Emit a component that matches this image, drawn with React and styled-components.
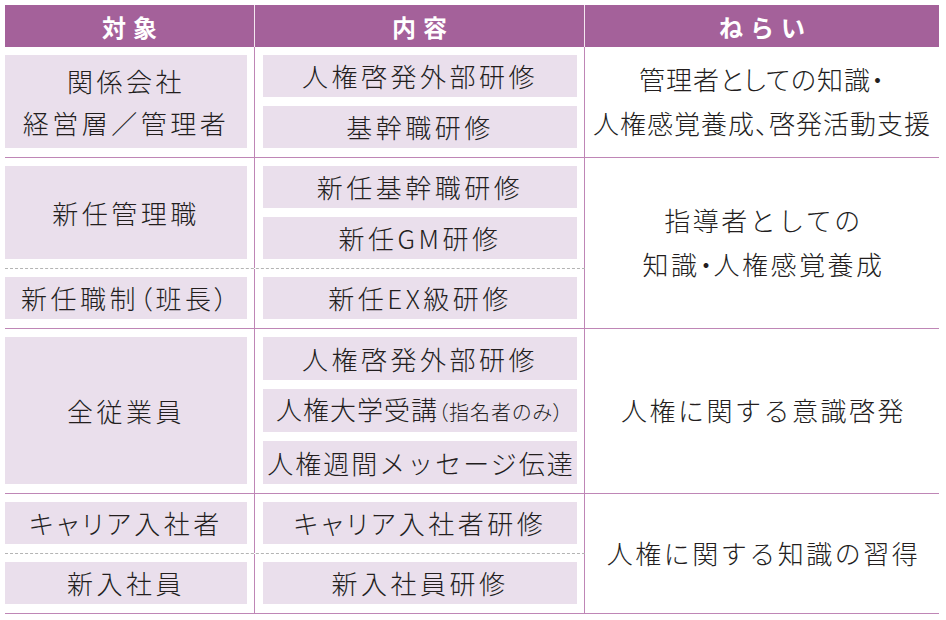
import React from "react";
import styled, { createGlobalStyle } from "styled-components";

const GlobalStyle = createGlobalStyle`
  body {
    margin: 0;
    background: #ffffff;
    font-family: "Noto Sans CJK JP", "Noto Sans", sans-serif;
    color: #231e1e;
  }
`;

const sections = [
  {
    groups: [
      {
        subject: ["関係会社", "経営層／管理者"],
        contents: [{ text: "人権啓発外部研修" }, { text: "基幹職研修" }],
      },
    ],
    aim: ["管理者としての知識・", "人権感覚養成、啓発活動支援"],
    compact: true,
  },
  {
    groups: [
      {
        subject: ["新任管理職"],
        contents: [{ text: "新任基幹職研修" }, { text: "新任GM研修" }],
      },
      {
        subject: ["新任職制（班長）"],
        contents: [{ text: "新任EX級研修" }],
      },
    ],
    aim: ["指導者としての", "知識・人権感覚養成"],
  },
  {
    groups: [
      {
        subject: ["全従業員"],
        contents: [
          { text: "人権啓発外部研修" },
          { text: "人権大学受講", note: "（指名者のみ）", tight: true },
          { text: "人権週間メッセージ伝達", wide: true },
        ],
      },
    ],
    aim: ["人権に関する意識啓発"],
  },
  {
    groups: [
      {
        subject: ["キャリア入社者"],
        contents: [{ text: "キャリア入社者研修" }],
      },
      {
        subject: ["新入社員"],
        contents: [{ text: "新入社員研修" }],
      },
    ],
    aim: ["人権に関する知識の習得"],
  },
];

const Page = styled.div`
  padding: 5px 7px 8px 5px;
`;

const Table = styled.div`
  width: 934px;
  display: flex;
  flex-direction: column;
`;

const HeadRow = styled.div`
  display: flex;
  height: 42px;
  background: #a4619a;
`;

const HeadCell = styled.div`
  width: ${(p) => p.$w}px;
  box-sizing: border-box;
  border-right: ${(p) => (p.$last ? "none" : "1px solid #f3e6f0")};
  display: flex;
  align-items: center;
  justify-content: center;
  color: #ffffff;
  font-weight: 700;
  font-size: 24px;
  letter-spacing: 7px;
  padding-left: 7px;
`;

const Section = styled.div`
  display: flex;
  border-bottom: 1px solid #bf86b6;
`;

const Groups = styled.div`
  display: flex;
  flex-direction: column;
`;

const Group = styled.div`
  display: flex;
  border-top: ${(p) => (p.$dashed ? "1px dashed #b4b4b4" : "none")};
`;

const SubjectCell = styled.div`
  width: 250px;
  box-sizing: border-box;
  border-right: 1px solid #bf86b6;
  padding: 8px 7px 9px 0;
  display: flex;
`;

const ContentCell = styled.div`
  width: 330px;
  box-sizing: border-box;
  border-right: 1px solid #bf86b6;
  padding: 8px 7px 9px 8px;
  display: flex;
  flex-direction: column;
  gap: 9px;
`;

const Box = styled.div`
  flex: 1;
  min-height: 42px;
  background: #eadfec;
  display: flex;
  flex-direction: column;
  align-items: center;
  justify-content: center;
  font-size: 26px;
  font-weight: 300;
  line-height: 42px;
  letter-spacing: ${(p) => (p.$tight ? "1px" : p.$wide ? "2px" : "3.5px")};
  font-feature-settings: ${(p) => (p.$wide ? "normal" : '"palt"')};
  padding-left: ${(p) => (p.$wide ? "2px" : "0")};
  white-space: nowrap;
`;

const Note = styled.span`
  font-size: 20px;
  letter-spacing: 1px;
`;

const AimCell = styled.div`
  width: 354px;
  display: flex;
  flex-direction: column;
  align-items: center;
  justify-content: center;
  font-size: 26px;
  font-weight: 300;
  line-height: 44px;
  letter-spacing: ${(p) => (p.$compact ? "1px" : "2.5px")};
  font-feature-settings: ${(p) => (p.$compact ? '"palt"' : "normal")};
  padding-left: ${(p) => (p.$compact ? "0" : "3px")};
  white-space: nowrap;
  padding-bottom: 2px;
`;

const Dot = styled.span`
  font-feature-settings: "palt";
  letter-spacing: 1px;
`;

const AimLine = ({ text }) => {
  const parts = text.split("・");
  return (
    <div>
      {parts.map((part, k) => (
        <React.Fragment key={k}>
          {k > 0 && <Dot>・</Dot>}
          {part}
        </React.Fragment>
      ))}
    </div>
  );
};

export default function App() {
  return (
    <Page>
      <GlobalStyle />
      <Table>
        <HeadRow>
          <HeadCell $w={250}>対象</HeadCell>
          <HeadCell $w={330}>内容</HeadCell>
          <HeadCell $w={354} $last>
            ねらい
          </HeadCell>
        </HeadRow>
        {sections.map((s, i) => (
          <Section key={i}>
            <Groups>
              {s.groups.map((g, j) => (
                <Group key={j} $dashed={j > 0}>
                  <SubjectCell>
                    <Box>
                      {g.subject.map((line) => (
                        <div key={line}>{line}</div>
                      ))}
                    </Box>
                  </SubjectCell>
                  <ContentCell>
                    {g.contents.map((c) => (
                      <Box key={c.text} $tight={c.tight} $wide={c.wide}>
                        <div>
                          {c.text}
                          {c.note && <Note>{c.note}</Note>}
                        </div>
                      </Box>
                    ))}
                  </ContentCell>
                </Group>
              ))}
            </Groups>
            <AimCell $compact={s.compact}>
              {s.aim.map((line) => (
                <AimLine key={line} text={line} />
              ))}
            </AimCell>
          </Section>
        ))}
      </Table>
    </Page>
  );
}
